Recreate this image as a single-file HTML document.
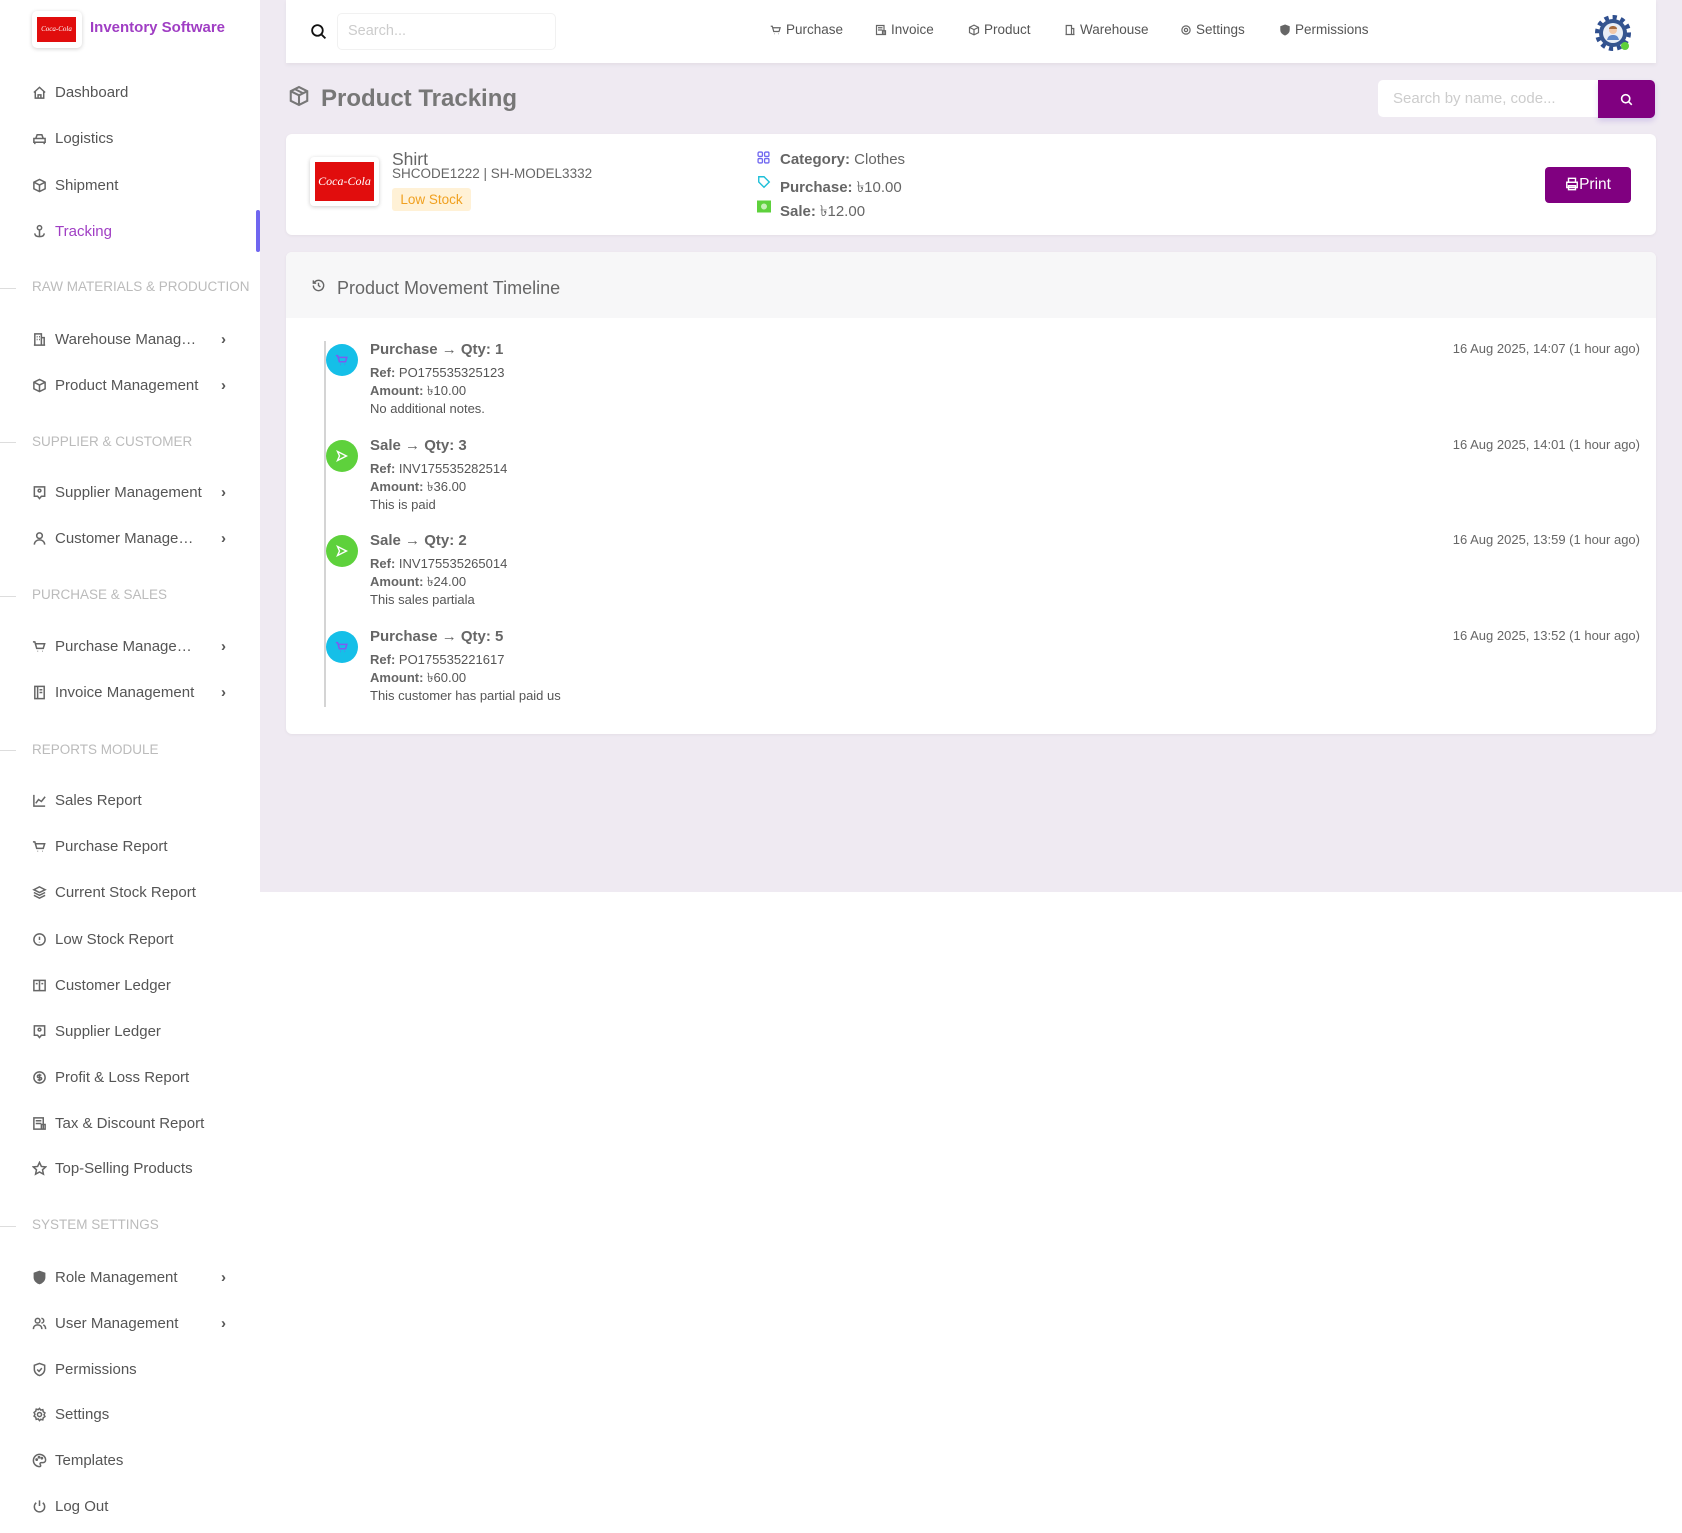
<!DOCTYPE html>
<html><head><meta charset="utf-8"><style>
*{box-sizing:border-box;margin:0;padding:0}
body{width:1682px;height:1533px;position:relative;font-family:"Liberation Sans",sans-serif;background:#fff;overflow:hidden;color:#666}
.abs{position:absolute}
#main{position:absolute;left:260px;top:0;width:1422px;height:892px;background:#efeaf2}
.nav{position:absolute;left:0;width:260px;height:30px;display:flex;align-items:center;font-size:15px;color:#555}
.nav svg{position:absolute;left:32px;width:15px;height:15px;fill:none;stroke:#666;stroke-width:1.6}
.nav span{position:absolute;left:55px}
.nav .ch{position:absolute;left:221px;font-size:15px;color:#555;font-weight:bold}
.sec{position:absolute;left:32px;font-size:13.5px;color:#bbb;text-transform:uppercase;height:20px;line-height:20px}
.dash{position:absolute;left:0;width:16px;height:1px;background:#ddd}
.tn{position:absolute;top:22px;font-size:13.5px;color:#555;display:flex;align-items:center;gap:4px}
.tn svg{width:12px;height:12px;fill:none;stroke:#666;stroke-width:1.6}
.card{position:absolute;background:#fff;border-radius:6px;box-shadow:0 1px 3px rgba(0,0,0,.05)}
.ti{position:absolute;left:370px;font-size:13px;color:#555;line-height:18px}
.ti b{color:#666}
.ti .h{font-size:15px;font-weight:bold;color:#666;margin-bottom:5px;display:block}
.dt{position:absolute;right:42px;font-size:13px;color:#666}
.dot{position:absolute;left:326px;width:32px;height:32px;border-radius:50%}
</style></head><body>
<div class="abs" style="left:32px;top:11px;width:50px;height:37px;border-radius:5px;background:#fff;box-shadow:0 1px 4px rgba(0,0,0,.18)"><div style="position:absolute;left:5px;top:6px;width:39px;height:25px;background:#e10d0d;color:#fff;font:italic 7px 'Liberation Serif',serif;text-align:center;line-height:25px;white-space:nowrap;overflow:hidden">Coca-Cola</div></div>
<div class="abs" style="left:90px;top:19px;font-size:15px;font-weight:bold;color:#a03ec4">Inventory Software</div>

<div class="nav" style="top:77px"><svg viewBox="0 0 16 16"><path d="M2 8L8 2.5 14 8M3.5 7v7h9V7M6.5 14v-3.5h3V14"/></svg><span>Dashboard</span></div>
<div class="nav" style="top:123px"><svg viewBox="0 0 16 16"><path d="M2 8h12v4H2zM4 8l1.5-4h5L12 8M3 12v2M13 12v2"/></svg><span>Logistics</span></div>
<div class="nav" style="top:170px"><svg viewBox="0 0 16 16"><path d="M8 1.5l6 3v7l-6 3-6-3v-7zM2 4.5l6 3 6-3M8 7.5v7"/></svg><span>Shipment</span></div>
<div class="nav" style="top:216px;color:#a03ec4"><svg viewBox="0 0 16 16"><circle cx="8" cy="4" r="2.3"/><path d="M8 6.5v7M3 10c0 2.5 2 3.5 5 3.5s5-1 5-3.5"/></svg><span>Tracking</span></div>
<div class="abs" style="left:256px;top:210px;width:4px;height:42px;background:#6f66f0;border-radius:2px"></div>

<div class="dash" style="top:288px"></div><div class="sec" style="top:277px">Raw Materials &amp; Production</div>
<div class="nav" style="top:324px"><svg viewBox="0 0 16 16"><path d="M3 14V2h7v12M10 6h3v8M2 14h12M5 5h1M7.5 5h1M5 8h1M7.5 8h1"/></svg><span>Warehouse Manag…</span><b class="ch">›</b></div>
<div class="nav" style="top:370px"><svg viewBox="0 0 16 16"><path d="M8 1.5l6 3v7l-6 3-6-3v-7zM2 4.5l6 3 6-3M8 7.5v7"/></svg><span>Product Management</span><b class="ch">›</b></div>

<div class="dash" style="top:442px"></div><div class="sec" style="top:432px">Supplier &amp; Customer</div>
<div class="nav" style="top:477px"><svg viewBox="0 0 16 16"><path d="M2.5 2h11v10H10l-2 2.5L6 12H2.5z"/><circle cx="8" cy="6" r="1.5"/></svg><span>Supplier Management</span><b class="ch">›</b></div>
<div class="nav" style="top:523px"><svg viewBox="0 0 16 16"><circle cx="8" cy="5" r="3"/><path d="M2.5 14.5c0-3 2.5-5 5.5-5s5.5 2 5.5 5"/></svg><span>Customer Manage…</span><b class="ch">›</b></div>

<div class="dash" style="top:596px"></div><div class="sec" style="top:585px">Purchase &amp; Sales</div>
<div class="nav" style="top:631px"><svg viewBox="0 0 16 16"><path d="M1 3h2l2 7h7l1.5-5H4M6 13h.5M11 13h.5"/></svg><span>Purchase Manage…</span><b class="ch">›</b></div>
<div class="nav" style="top:677px"><svg viewBox="0 0 16 16"><path d="M3 1.5h10v13H3zM6 1.5v13M8 5h3M8 8h3"/></svg><span>Invoice Management</span><b class="ch">›</b></div>

<div class="dash" style="top:750px"></div><div class="sec" style="top:740px">Reports Module</div>
<div class="nav" style="top:785px"><svg viewBox="0 0 16 16"><path d="M2 2v12h12M4 11l3-4 3 2 4-5"/></svg><span>Sales Report</span></div>
<div class="nav" style="top:831px"><svg viewBox="0 0 16 16"><path d="M1 3h2l2 7h7l1.5-5H4M6 13h.5M11 13h.5"/></svg><span>Purchase Report</span></div>
<div class="nav" style="top:877px"><svg viewBox="0 0 16 16"><path d="M8 2l6 3-6 3-6-3zM2 8l6 3 6-3M2 11l6 3 6-3"/></svg><span>Current Stock Report</span></div>
<div class="nav" style="top:924px"><svg viewBox="0 0 16 16"><circle cx="8" cy="8" r="6"/><path d="M8 5v3.5M8 10.5v.5"/></svg><span>Low Stock Report</span></div>
<div class="nav" style="top:970px"><svg viewBox="0 0 16 16"><path d="M2 2.5h12v11H2zM8 2.5v11M4 6h2M10 6h2"/></svg><span>Customer Ledger</span></div>
<div class="nav" style="top:1016px"><svg viewBox="0 0 16 16"><path d="M2.5 2h11v10H10l-2 2.5L6 12H2.5z"/><circle cx="8" cy="6" r="1.5"/></svg><span>Supplier Ledger</span></div>
<div class="nav" style="top:1062px"><svg viewBox="0 0 16 16"><circle cx="8" cy="8" r="6"/><path d="M10 5.5H7a1.2 1.2 0 000 2.5h2a1.2 1.2 0 010 2.5H6M8 4v8"/></svg><span>Profit &amp; Loss Report</span></div>
<div class="nav" style="top:1108px"><svg viewBox="0 0 16 16"><path d="M2 2h10v12H2zM4 5h6M4 8h6M10 9h4v5h-4z"/></svg><span>Tax &amp; Discount Report</span></div>
<div class="nav" style="top:1153px"><svg viewBox="0 0 16 16"><path d="M8 1.5l2 4.3 4.6.5-3.4 3.1 1 4.6L8 11.7 3.8 14l1-4.6L1.4 6.3 6 5.8z"/></svg><span>Top-Selling Products</span></div>

<div class="dash" style="top:1226px"></div><div class="sec" style="top:1215px">System Settings</div>
<div class="nav" style="top:1262px"><svg viewBox="0 0 16 16"><path d="M8 1.5l5.5 2v4.5c0 3-2.5 5.5-5.5 6.5-3-1-5.5-3.5-5.5-6.5V3.5z" fill="#666"/></svg><span>Role Management</span><b class="ch">›</b></div>
<div class="nav" style="top:1308px"><svg viewBox="0 0 16 16"><circle cx="6" cy="5" r="2.5"/><path d="M1.5 14c0-3 2-4.5 4.5-4.5s4.5 1.5 4.5 4.5M10 2.5a2.5 2.5 0 010 5M12 9.5c1.5.5 2.5 2 2.5 4.5"/></svg><span>User Management</span><b class="ch">›</b></div>
<div class="nav" style="top:1354px"><svg viewBox="0 0 16 16"><path d="M8 1.5l5.5 2v4.5c0 3-2.5 5.5-5.5 6.5-3-1-5.5-3.5-5.5-6.5V3.5zM5.5 8l2 2 3-3.5"/></svg><span>Permissions</span></div>
<div class="nav" style="top:1399px"><svg viewBox="0 0 16 16"><circle cx="8" cy="8" r="2.2"/><path d="M8 1.5l1.3 1.8 2.2-.5.5 2.2 1.8 1.3-1 2 1 1.9-1.8 1.3-.5 2.2-2.2-.5L8 14.5l-1.3-1.8-2.2.5-.5-2.2L2.2 9.7l1-1.9-1-2L4 4.5l.5-2.2 2.2.5z"/></svg><span>Settings</span></div>
<div class="nav" style="top:1445px"><svg viewBox="0 0 16 16"><path d="M8 1.5a6.5 6.5 0 000 13c1.5 0 1.5-1.5.8-2.3-.7-.8 0-2 1-2h2a2.7 2.7 0 002.7-2.7C14.5 4 11.5 1.5 8 1.5z"/><circle cx="5" cy="7" r=".7"/><circle cx="7.5" cy="4.5" r=".7"/><circle cx="10.5" cy="5.5" r=".7"/></svg><span>Templates</span></div>
<div class="nav" style="top:1491px"><svg viewBox="0 0 16 16"><path d="M8 1.5v6M4.5 4a5.5 5.5 0 107 0"/></svg><span>Log Out</span></div>

<div id="main"></div>
<div class="abs" style="left:286px;top:0;width:1370px;height:63px;background:#fff;box-shadow:0 2px 4px rgba(0,0,0,.05)"></div>
<svg class="abs" style="left:310px;top:23px" width="17" height="17" viewBox="0 0 16 16" fill="none" stroke="#111" stroke-width="1.7"><circle cx="7" cy="7" r="5"/><path d="M11 11l3.5 3.5"/></svg>
<div class="abs" style="left:337px;top:13px;width:219px;height:37px;border:1px solid #f1f1f1;border-radius:5px;padding-left:10px;line-height:35px;font-size:14.5px;color:#ccc">Search...</div>
<div class="tn" style="left:770px"><svg viewBox="0 0 16 16"><path d="M1 3h2l2 7h7l1.5-5H4M6 13h.5M11 13h.5"/></svg>Purchase</div>
<div class="tn" style="left:875px"><svg viewBox="0 0 16 16"><path d="M2 2h10v12H2zM4 5h6M4 8h6M10 9h4v5h-4z"/></svg>Invoice</div>
<div class="tn" style="left:968px"><svg viewBox="0 0 16 16"><path d="M8 1.5l6 3v7l-6 3-6-3v-7zM2 4.5l6 3 6-3M8 7.5v7"/></svg>Product</div>
<div class="tn" style="left:1064px"><svg viewBox="0 0 16 16"><path d="M3 14V2h7v12M10 6h3v8M2 14h12"/></svg>Warehouse</div>
<div class="tn" style="left:1180px"><svg viewBox="0 0 16 16"><circle cx="8" cy="8" r="2.2"/><circle cx="8" cy="8" r="5.5"/></svg>Settings</div>
<div class="tn" style="left:1279px"><svg viewBox="0 0 16 16"><path d="M8 1.5l5.5 2v4.5c0 3-2.5 5.5-5.5 6.5-3-1-5.5-3.5-5.5-6.5V3.5z" fill="#666"/></svg>Permissions</div>
<svg class="abs" style="left:1593px;top:13px" width="40" height="40" viewBox="0 0 40 40"><circle cx="20" cy="20" r="15" fill="none" stroke="#2f4f8f" stroke-width="6" stroke-dasharray="4 3.8"/><circle cx="20" cy="20" r="14" fill="#35558f"/><circle cx="20" cy="20" r="10" fill="#e9eef6"/><circle cx="20" cy="17" r="4" fill="#f2c8a8"/><path d="M14 27c1-4 3-5 6-5s5 1 6 5z" fill="#5e86c8"/><path d="M16 16c0-4 8-4 8 0" fill="#a56a3e"/><circle cx="32" cy="33" r="4" fill="#5ed13c"/></svg>

<svg class="abs" style="left:288px;top:85px" width="22" height="22" viewBox="0 0 16 16" fill="none" stroke="#777" stroke-width="1.5"><path d="M8 1.5l6 3v7l-6 3-6-3v-7zM2 4.5l6 3 6-3M8 7.5v7M5 3l6 3"/></svg>
<div class="abs" style="left:321px;top:85px;font-size:24px;font-weight:bold;color:#777">Product Tracking</div>
<div class="abs" style="left:1378px;top:80px;width:222px;height:37px;background:#fff;border-radius:5px 0 0 5px;padding-left:15px;line-height:37px;font-size:15px;color:#ccc">Search by name, code...</div>
<div class="abs" style="left:1598px;top:80px;width:57px;height:38px;background:#800080;border-radius:0 5px 5px 0;box-shadow:0 3px 6px rgba(100,60,200,.2)"><svg style="position:absolute;left:22px;top:13px" width="13" height="13" viewBox="0 0 16 16" fill="none" stroke="#fff" stroke-width="2"><circle cx="7" cy="7" r="5"/><path d="M11 11l3.5 3.5"/></svg></div>

<div class="card" style="left:286px;top:134px;width:1370px;height:101px"></div>
<div class="abs" style="left:310px;top:157px;width:69px;height:49px;background:#fff;border-radius:4px;box-shadow:0 1px 4px rgba(0,0,0,.2)"><div style="position:absolute;left:5px;top:5px;width:59px;height:39px;background:#e10d0d;color:#fff;font:italic 12px 'Liberation Serif',serif;text-align:center;line-height:39px;white-space:nowrap">Coca-Cola</div></div>
<div class="abs" style="left:392px;top:149px;font-size:17.5px;color:#666">Shirt</div>
<div class="abs" style="left:392px;top:166px;font-size:13.5px;color:#666">SHCODE1222 | SH-MODEL3332</div>
<div class="abs" style="left:392px;top:188px;width:79px;height:23px;background:#fff1d6;border-radius:3px;font-size:13.5px;color:#f0a020;text-align:center;line-height:23px">Low Stock</div>
<svg class="abs" style="left:757px;top:151px" width="13" height="13" viewBox="0 0 12 12" fill="none" stroke="#6f66f0" stroke-width="1.2"><rect x="1" y="1" width="4" height="4" rx="1"/><rect x="7" y="1" width="4" height="4" rx="1"/><rect x="1" y="7" width="4" height="4" rx="1"/><rect x="7" y="7" width="4" height="4" rx="1"/></svg>
<svg class="abs" style="left:757px;top:175px" width="14" height="14" viewBox="0 0 16 16" fill="none" stroke="#1ebfd8" stroke-width="1.6"><path d="M2 2h6l6 6-6 6-6-6z"/></svg>
<svg class="abs" style="left:757px;top:200px" width="14" height="13" viewBox="0 0 14 12"><rect x="0" y="0" width="14" height="12" fill="#5ed13c"/><circle cx="7" cy="6" r="3" fill="#c5f0b5"/></svg>
<div class="abs" style="left:780px;top:151px;font-size:15px;color:#666"><b>Category:</b> Clothes</div>
<div class="abs" style="left:780px;top:176px;font-size:15px;color:#666"><b>Purchase:</b> ৳10.00</div>
<div class="abs" style="left:780px;top:200px;font-size:15px;color:#666"><b>Sale:</b> ৳12.00</div>
<div class="abs" style="left:1545px;top:167px;width:86px;height:36px;background:#800080;border-radius:4px;color:#fff;font-size:15.5px;line-height:36px;text-align:center"><svg style="vertical-align:-2px" width="14" height="14" viewBox="0 0 16 16" fill="none" stroke="#fff" stroke-width="1.6"><path d="M4 6V1.5h8V6M2 6h12v6H2zM4 10h8v4.5H4z"/></svg>Print</div>

<div class="card" style="left:286px;top:252px;width:1370px;height:482px;overflow:hidden"><div style="height:66px;background:#f7f7f8"></div></div>
<svg class="abs" style="left:311px;top:278px" width="15" height="15" viewBox="0 0 16 16" fill="none" stroke="#666" stroke-width="1.5"><path d="M2.5 8a5.5 5.5 0 101.6-3.9L2.5 5.5M2.5 2.5v3h3M8 5v3l2 1.5"/></svg>
<div class="abs" style="left:337px;top:278px;font-size:18px;color:#666">Product Movement Timeline</div>
<div class="abs" style="left:324px;top:341px;width:2px;height:366px;background:#d4d4d4"></div>

<div class="dot" style="top:344px;background:#15bfe8"><svg style="position:absolute;left:9px;top:9px" width="14" height="14" viewBox="0 0 16 16" fill="none" stroke="#7b5cf0" stroke-width="1.8"><path d="M1 3h2l2 7h7l1.5-5H4M6 13h.5M11 13h.5"/></svg></div>
<div class="dot" style="top:440px;background:#5ed13c"><svg style="position:absolute;left:10px;top:10px" width="12" height="12" viewBox="0 0 12 12" fill="none" stroke="#fff" stroke-width="1.4"><path d="M1.5 1.5l9 4.5-9 4.5 2-4.5z"/></svg></div>
<div class="dot" style="top:535px;background:#5ed13c"><svg style="position:absolute;left:10px;top:10px" width="12" height="12" viewBox="0 0 12 12" fill="none" stroke="#fff" stroke-width="1.4"><path d="M1.5 1.5l9 4.5-9 4.5 2-4.5z"/></svg></div>
<div class="dot" style="top:631px;background:#15bfe8"><svg style="position:absolute;left:9px;top:9px" width="14" height="14" viewBox="0 0 16 16" fill="none" stroke="#7b5cf0" stroke-width="1.8"><path d="M1 3h2l2 7h7l1.5-5H4M6 13h.5M11 13h.5"/></svg></div>

<div class="ti" style="top:341px"><span class="h">Purchase → Qty: 1</span><b>Ref:</b> PO175535325123<br><b>Amount:</b> ৳10.00<br>No additional notes.</div>
<div class="dt" style="top:341px">16 Aug 2025, 14:07 (1 hour ago)</div>
<div class="ti" style="top:437px"><span class="h">Sale → Qty: 3</span><b>Ref:</b> INV175535282514<br><b>Amount:</b> ৳36.00<br>This is paid</div>
<div class="dt" style="top:437px">16 Aug 2025, 14:01 (1 hour ago)</div>
<div class="ti" style="top:532px"><span class="h">Sale → Qty: 2</span><b>Ref:</b> INV175535265014<br><b>Amount:</b> ৳24.00<br>This sales partiala</div>
<div class="dt" style="top:532px">16 Aug 2025, 13:59 (1 hour ago)</div>
<div class="ti" style="top:628px"><span class="h">Purchase → Qty: 5</span><b>Ref:</b> PO175535221617<br><b>Amount:</b> ৳60.00<br>This customer has partial paid us</div>
<div class="dt" style="top:628px">16 Aug 2025, 13:52 (1 hour ago)</div>
</body></html>
